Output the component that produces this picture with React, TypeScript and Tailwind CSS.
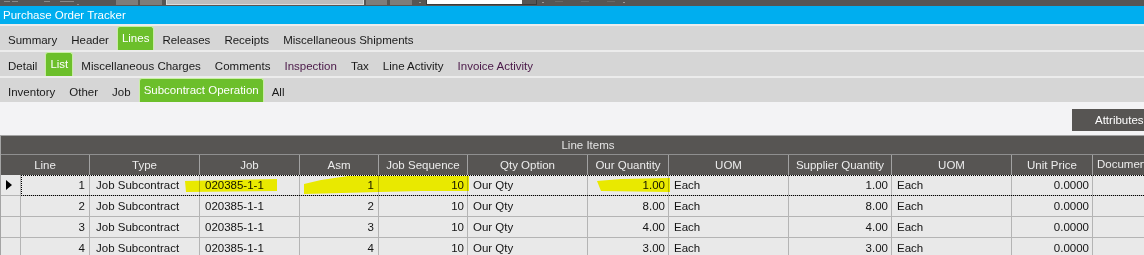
import React from 'react'

const font = { fontFamily: '"Liberation Sans", Arial, sans-serif' }

type Tab = { label: string; active?: boolean; purple?: boolean }

const row1: Tab[] = [
  { label: 'Summary' },
  { label: 'Header' },
  { label: 'Lines', active: true },
  { label: 'Releases' },
  { label: 'Receipts' },
  { label: 'Miscellaneous Shipments' },
]

const row2: Tab[] = [
  { label: 'Detail' },
  { label: 'List', active: true },
  { label: 'Miscellaneous Charges' },
  { label: 'Comments' },
  { label: 'Inspection', purple: true },
  { label: 'Tax' },
  { label: 'Line Activity' },
  { label: 'Invoice Activity', purple: true },
]

const row3: Tab[] = [
  { label: 'Inventory' },
  { label: 'Other' },
  { label: 'Job' },
  { label: 'Subcontract Operation', active: true },
  { label: 'All' },
]

function TabRow({ tabs }: { tabs: Tab[] }) {
  return (
    <div className="h-[24px] bg-[#d6d6d6] flex items-stretch pl-[1px]">
      {tabs.map((t) =>
        t.active ? (
          <div
            key={t.label}
            className="mx-[1px] px-[4px] bg-[#6cbf2b] border border-b-0 border-[#c9eea5] rounded-t-[3px] text-white flex items-center pb-[1px]"
          >
            {t.label}
          </div>
        ) : (
          <div
            key={t.label}
            className={
              'px-[7px] flex items-center pt-[4px] whitespace-nowrap ' +
              (t.purple ? 'text-[#4a1848]' : 'text-[#1a1a1a]')
            }
          >
            {t.label}
          </div>
        )
      )}
    </div>
  )
}

const headers = [
  'Type',
  'Job',
  'Asm',
  'Job Sequence',
  'Qty Option',
  'Our Quantity',
  'UOM',
  'Supplier Quantity',
  'UOM',
  'Unit Price',
]

const lines = [
  { line: 1, asm: 1, qty: '1.00' },
  { line: 2, asm: 2, qty: '8.00' },
  { line: 3, asm: 3, qty: '4.00' },
  { line: 4, asm: 4, qty: '3.00' },
]

const cols =
  'grid grid-cols-[20px_69px_110px_100px_79px_89px_120px_81px_120px_103px_120px_81px_83px]'

export default function App() {
  return (
    <div
      className="w-[1144px] h-[255px] overflow-hidden bg-[#f3f3f5] text-[11.5px] leading-[13px]"
      style={font}
    >
      {/* top toolbar strip */}
      <div className="h-[6px] bg-[#575553] flex items-stretch overflow-hidden">
        <div className="w-[4px]" />
        <div className="w-[6px] h-[1px] bg-[#8a8886] mt-[1px]" />
        <div className="w-[2px]" />
        <div className="w-[6px] h-[1px] bg-[#8a8886] mt-[1px]" />
        <div className="w-[26px]" />
        <div className="w-[6px] h-[1px] bg-[#8a8886] mt-[1px]" />
        <div className="w-[10px]" />
        <div className="w-[14px] h-[1px] bg-[#8a8886] mt-[1px]" />
        <div className="w-[3px]" />
        <div className="w-[2px] h-[1px] bg-[#8a8886] mt-[4px]" />
        <div className="w-[37px]" />
        <div className="w-[22px] h-[5px] bg-[#7e7c7a]" />
        <div className="w-[2px]" />
        <div className="w-[22px] h-[5px] bg-[#7e7c7a]" />
        <div className="w-[4px]" />
        <div className="w-[198px] h-[5px] bg-[#bdbdbd] border-x border-b border-[#dcdcdc]" />
        <div className="w-[2px]" />
        <div className="w-[21px] h-[5px] bg-[#7e7c7a]" />
        <div className="w-[3px]" />
        <div className="w-[22px] h-[5px] bg-[#7e7c7a]" />
        <div className="w-[7px]" />
        <div className="w-[2px] h-[1px] bg-[#9a9896] mt-[2px]" />
        <div className="w-[5px]" />
        <div className="w-[111px] h-[5px] bg-white border-x border-b border-[#3a3a3a] flex justify-end">
          <div className="w-[14px] bg-[#575553]" />
        </div>
        <div className="w-[5px]" />
        <div className="w-[2px] h-[1px] bg-[#9a9896] mt-[2px]" />
        <div className="w-[11px]" />
        <div className="w-[8px] h-[1px] bg-[#6a6866] mt-[1px]" />
        <div className="w-[18px]" />
        <div className="w-[8px] h-[1px] bg-[#6a6866] mt-[1px]" />
        <div className="w-[18px]" />
        <div className="w-[8px] h-[1px] bg-[#6a6866] mt-[1px]" />
        <div className="w-[8px]" />
        <div className="w-[2px] h-[1px] bg-[#9a9896] mt-[2px]" />
      </div>

      {/* title */}
      <div className="h-[18px] bg-[#00aeef] text-white flex items-center px-[3px]">
        Purchase Order Tracker
      </div>

      {/* tab rows */}
      <div className="bg-[#ececec] flex flex-col gap-[2px] pt-[2px]">
        <TabRow tabs={row1} />
        <TabRow tabs={row2} />
        <TabRow tabs={row3} />
      </div>

      {/* toolbar */}
      <div className="h-[33px] flex justify-end items-start pt-[7px]">
        <div className="w-[72px] h-[22px] bg-[#575553] text-white flex items-center pl-[23px] whitespace-nowrap overflow-hidden">
          Attributes...
        </div>
      </div>

      {/* grid */}
      <div className="relative w-[1175px] border-l border-t border-[#a4a4a4]">
        <div className="h-[19px] bg-[#575553] text-[#e4e4e4] flex items-center justify-center border-b border-[#8f8f8f]">
          Line Items
        </div>

        <div className={cols + ' h-[20px] bg-[#575553] text-[#ececec]'}>
          <div className="col-span-2 flex items-center justify-center border-r border-[#a2a2a2]">
            Line
          </div>
          {headers.map((h, i) => (
            <div
              key={i}
              className="flex items-center justify-center border-r border-[#a2a2a2] whitespace-nowrap overflow-hidden"
            >
              {h}
            </div>
          ))}
          <div className="flex items-start pt-[3px] pl-[4px] whitespace-nowrap overflow-hidden">
            Document Reference
          </div>
        </div>

        {lines.map((l, idx) => {
          const sel = idx === 0
          return (
            <div key={l.line} className={cols + ' h-[21px] bg-[#e9e9e9] text-[#141414]'}>
              <div className="flex items-center justify-center border-r border-b border-[#b4b4b4]">
                {sel && (
                  <svg width="6" height="10" viewBox="0 0 6 10" className="ml-[-3px]">
                    <polygon points="0,0 6,5 0,10" fill="#000" />
                  </svg>
                )}
              </div>
              <div className="col-span-12 relative">
                <div className="grid grid-cols-[69px_110px_100px_79px_89px_120px_81px_120px_103px_120px_81px_83px] h-full">
                  <div className="flex items-center justify-end pr-[4px] border-r border-b border-[#b4b4b4]">
                    {l.line}
                  </div>
                  <div className="flex items-center pl-[6px] border-r border-b border-[#b4b4b4]">
                    Job Subcontract
                  </div>
                  <div className="flex items-center pl-[5px] border-r border-b border-[#b4b4b4]">
                    020385-1-1
                  </div>
                  <div className="flex items-center justify-end pr-[4px] border-r border-b border-[#b4b4b4]">
                    {l.asm}
                  </div>
                  <div className="flex items-center justify-end pr-[3px] border-r border-b border-[#b4b4b4]">
                    10
                  </div>
                  <div className="flex items-center pl-[5px] border-r border-b border-[#b4b4b4]">
                    Our Qty
                  </div>
                  <div className="flex items-center justify-end pr-[3px] border-r border-b border-[#b4b4b4]">
                    {l.qty}
                  </div>
                  <div className="flex items-center pl-[5px] border-r border-b border-[#b4b4b4]">
                    Each
                  </div>
                  <div className="flex items-center justify-end pr-[3px] border-r border-b border-[#b4b4b4]">
                    {l.qty}
                  </div>
                  <div className="flex items-center pl-[5px] border-r border-b border-[#b4b4b4]">
                    Each
                  </div>
                  <div className="flex items-center justify-end pr-[3px] border-r border-b border-[#b4b4b4]">
                    0.0000
                  </div>
                  <div className="border-b border-[#b4b4b4]" />
                </div>
                {sel && (
                  <div className="absolute inset-0 border border-dotted border-black pointer-events-none" />
                )}
              </div>
            </div>
          )
        })}

        {/* marker highlights drawn over the first row */}
        <svg
          className="absolute left-0 top-0 pointer-events-none mix-blend-multiply"
          width="1175"
          height="120"
          viewBox="0 0 1175 120"
        >
          <polygon
            points="184,45 276,43 276,55 185,56"
            fill="#ffff00"
          />
          <polygon
            points="303,48 320,44 347,40 468,40 468,55 420,55 378,56 303,58"
            fill="#ffff00"
          />
          <polygon
            points="596,45 620,43 669,42 669,56 600,55"
            fill="#ffff00"
          />
        </svg>
      </div>
    </div>
  )
}
